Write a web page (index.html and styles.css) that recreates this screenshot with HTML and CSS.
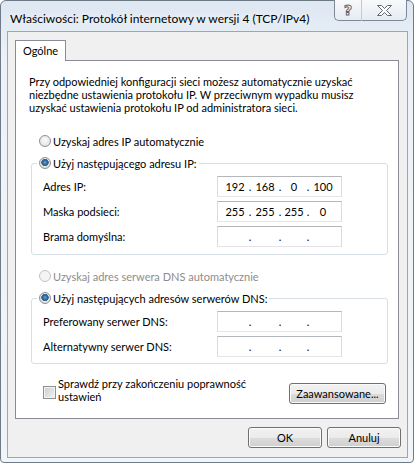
FILE: index.html
```html
<!DOCTYPE html>
<html lang="pl">
<head>
    <meta charset="UTF-8">
    <title>Właściwości: Protokół internetowy w wersji 4 (TCP/IPv4)</title>
    <link rel="stylesheet" href="styles.css">
</head>
<body>
    <div class="window">
        <div class="titlebar">
            <span class="title">Właściwości: Protokół internetowy w wersji 4 (TCP/IPv4)</span>
            <div class="caption-btns">
                <div class="cap help"><span>?</span></div>
                <div class="cap close">
                    <svg width="15" height="11" viewBox="0 0 15 11">
                        <polygon points="0.5,0.5 4.5,0.5 7.5,3.5 10.5,0.5 14.5,0.5 9.5,5.5 14.5,10.5 10.5,10.5 7.5,7.5 4.5,10.5 0.5,10.5 5.5,5.5" fill="#fff" stroke="#5e6570" stroke-width="1"/>
                    </svg>
                </div>
            </div>
        </div>

        <div class="client">
            <div class="tabs">
                <div class="tab">Ogólne</div>
            </div>
            <div class="panel">
                <p class="intro">Przy odpowiedniej konfiguracji sieci możesz automatycznie uzyskać<br>niezbędne ustawienia protokołu IP. W przeciwnym wypadku musisz<br>uzyskać ustawienia protokołu IP od administratora sieci.</p>

                <div class="option"><span class="radio"></span>Uzyskaj adres IP automatycznie</div>

                <fieldset class="group">
                    <legend><span class="radio checked"></span>Użyj następującego adresu IP:</legend>
                    <div class="field-row">
                        <span>Adres IP:</span>
                        <div class="ip"><span>192</span><i>.</i><span>168</span><i>.</i><span>0</span><i>.</i><span>100</span></div>
                    </div>
                    <div class="field-row">
                        <span>Maska podsieci:</span>
                        <div class="ip"><span>255</span><i>.</i><span>255</span><i>.</i><span>255</span><i>.</i><span>0</span></div>
                    </div>
                    <div class="field-row">
                        <span>Brama domyślna:</span>
                        <div class="ip"><span></span><i>.</i><span></span><i>.</i><span></span><i>.</i><span></span></div>
                    </div>
                </fieldset>

                <div class="option disabled"><span class="radio"></span>Uzyskaj adres serwera DNS automatycznie</div>

                <fieldset class="group">
                    <legend><span class="radio checked"></span>Użyj następujących adresów serwerów DNS:</legend>
                    <div class="field-row">
                        <span>Preferowany serwer DNS:</span>
                        <div class="ip"><span></span><i>.</i><span></span><i>.</i><span></span><i>.</i><span></span></div>
                    </div>
                    <div class="field-row">
                        <span>Alternatywny serwer DNS:</span>
                        <div class="ip"><span></span><i>.</i><span></span><i>.</i><span></span><i>.</i><span></span></div>
                    </div>
                </fieldset>

                <div class="bottom-row">
                    <span class="checkbox"></span>
                    <span class="check-label">Sprawdź przy zakończeniu poprawność<br>ustawień</span>
                    <button class="btn advanced">Zaawansowane...</button>
                </div>
            </div>

            <div class="dialog-btns">
                <button class="btn">OK</button>
                <button class="btn">Anuluj</button>
            </div>
        </div>
    </div>
</body>
</html>
```

FILE: styles.css
```css
* {
    box-sizing: border-box;
}
body {
    margin: 0;
    width: 416px;
    height: 465px;
    overflow: hidden;
    background-color: #fff;
    font-family: Lato, 'Liberation Sans', sans-serif;
    font-size: 11px;
    color: #000;
}

/* okno z ramką aero */
.window {
    width: 414px;
    height: 463px;
    border: 1px solid #6f7a87;
    border-radius: 6px 6px 4px 4px;
    background: linear-gradient(to bottom, #dde7f2, #edf2f8 60px, #f1f5f9);
    padding: 0 5px 4px 6px;
    display: flex;
    flex-direction: column;
}
.titlebar {
    height: 30px;
    display: flex;
    align-items: flex-start;
}
.title {
    padding: 10px 0 0 3px;
    font-size: 12px;
    line-height: 16px;
    text-shadow: 0 0 6px #fff;
}
.caption-btns {
    margin-left: auto;
    margin-right: 1px;
    margin-top: -1px;
    display: flex;
}
.cap {
    height: 21px;
    border: 1px solid #7d8894;
    border-top: none;
    background: linear-gradient(to bottom, #f7f9fb, #e6ecf2);
    display: flex;
    align-items: center;
    justify-content: center;
}
.help {
    width: 28px;
    border-right: 1px solid #c3cad2;
    border-radius: 0 0 0 5px;
}
.help span {
    font-family: 'DejaVu Sans', sans-serif;
    font-weight: bold;
    font-size: 14px;
    color: #fff;
    -webkit-text-stroke: 1px #5e6570;
    margin-top: -1px;
}
.close {
    width: 45px;
    border-left: none;
    border-radius: 0 0 5px 0;
}

/* obszar klienta */
.client {
    flex: 1;
    border: 1px solid #9ea7b1;
    background-color: #f0f0f0;
    padding: 8px 8px 0 7px;
}
.tabs {
    display: flex;
}
.tab {
    position: relative;
    z-index: 1;
    height: 21px;
    margin-bottom: -1px;
    padding: 0 7px;
    border: 1px solid #898c95;
    border-bottom: none;
    background-color: #fff;
    line-height: 19px;
}
.panel {
    border: 1px solid #898c95;
    background-color: #fff;
    padding: 14px 10px 14px 13px;
}
.intro {
    margin: 0;
    line-height: 13px;
}

.option {
    margin-top: 19px;
    height: 16px;
    display: flex;
    align-items: center;
    padding-left: 10px;
}
.option.disabled {
    margin-top: 13px;
    color: #8d8d8d;
}
.radio {
    width: 12px;
    height: 12px;
    margin-right: 2px;
    border-radius: 50%;
    border: 1px solid #8e8f8f;
    background: radial-gradient(circle at 50% 40%, #fbfbfb, #dcdcdc);
    flex-shrink: 0;
}
.radio.checked {
    background: radial-gradient(circle at 50% 45%, #6aa6d4 0, #2f5f8c 2.5px, #3f6f9c 3.5px, #e9e9e9 4px, #dadada 6px);
}
.option.disabled .radio {
    border-color: #c2c2c2;
    background: #f4f4f4;
}

.group {
    margin: 6px 0 0 2px;
    padding: 5px 0 6px 0;
    border: 1px solid #d5dfe5;
    border-radius: 3px;
    min-inline-size: 0;
}
.group:first-of-type {
    padding-bottom: 7px;
}
.group legend {
    margin-left: 5px;
    padding: 0 2px;
    height: 16px;
    display: flex;
    align-items: center;
}
.field-row {
    display: grid;
    grid-template-columns: 174px 125px;
    align-items: center;
    padding-left: 11px;
    height: 21px;
}
.field-row + .field-row {
    margin-top: 4px;
}
.ip {
    height: 21px;
    border: 1px solid;
    border-color: #b3b6bb #d9dbde #e3e5e8 #d9dbde;
    padding-left: 4px;
    display: grid;
    grid-template-columns: 26px 4px 26px 4px 24px 4px 26px;
    align-items: center;
    text-align: center;
}
.ip i {
    font-style: normal;
}

.bottom-row {
    margin-top: 14px;
    display: flex;
    align-items: flex-start;
}
.checkbox {
    width: 13px;
    height: 13px;
    margin: 8px 2px 0 14px;
    border: 1px solid #8e8f8f;
    background: linear-gradient(135deg, #c9ccd1, #f3f3f3);
    box-shadow: inset 0 0 0 1px #f4f4f4;
    flex-shrink: 0;
}
.check-label {
    line-height: 12.5px;
}

.btn {
    height: 21px;
    padding: 0;
    font: inherit;
    color: #000;
    border: 1px solid #707070;
    border-radius: 3px;
    background: linear-gradient(to bottom, #f2f2f2 0%, #ebebeb 50%, #dddddd 51%, #cfcfcf 100%);
    box-shadow: inset 0 0 0 1px #fbfbfb;
}
.advanced {
    width: 97px;
    margin: 5px 2px 0 auto;
}
.dialog-btns {
    margin: 8px -2px 0 0;
    display: flex;
    justify-content: flex-end;
    gap: 5px;
}
.dialog-btns .btn {
    width: 74px;
}
```
